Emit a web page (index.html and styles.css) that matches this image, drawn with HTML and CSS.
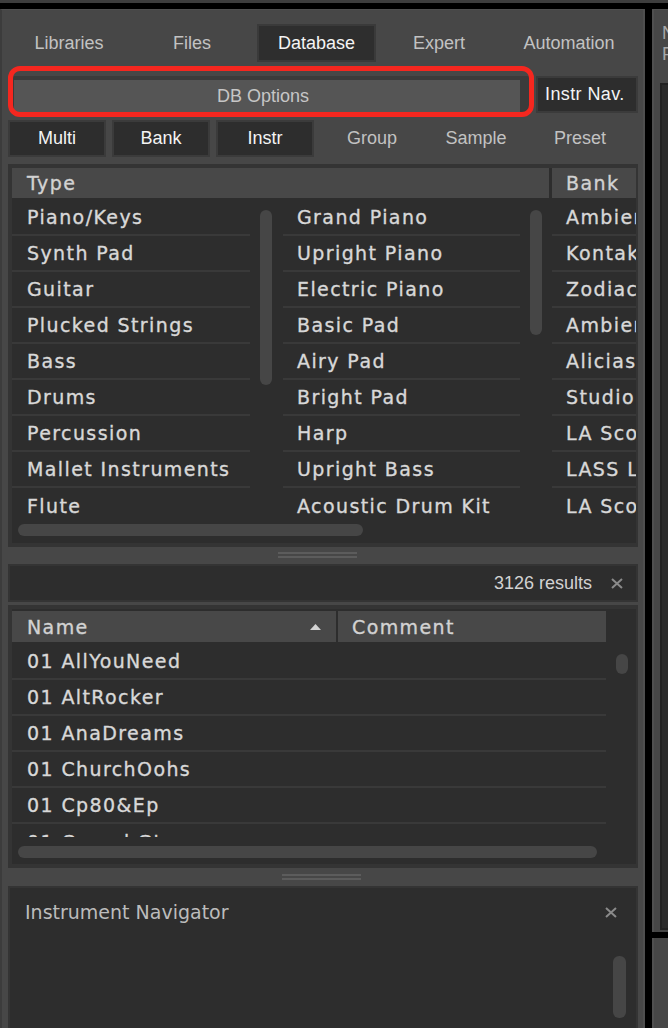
FILE: index.html
```html
<!DOCTYPE html>
<html>
<head>
<meta charset="utf-8">
<link rel="stylesheet" href="styles.css">
</head>
<body>
<div class="topbar"></div>
<div class="workspace">
  <div class="browser">
    <div class="tabs">
      <div class="tab">Libraries</div>
      <div class="tab">Files</div>
      <div class="tab active">Database</div>
      <div class="tab">Expert</div>
      <div class="tab">Automation</div>
    </div>
    <div class="dbrow">
      <div class="dbopt">DB Options</div>
      <div class="instrnav">Instr Nav.</div>
    </div>
    <div class="highlight"></div>
    <div class="filters">
      <div class="filt on">Multi</div>
      <div class="filt on">Bank</div>
      <div class="filt on">Instr</div>
      <div class="filt">Group</div>
      <div class="filt">Sample</div>
      <div class="filt">Preset</div>
    </div>

    <div class="attr">
      <div class="attr-head">
        <div class="hcell type">Type</div>
        <div class="hsep"></div>
        <div class="hcell bank">Bank</div>
      </div>
      <div class="attr-body">
        <div class="col c1">
          <div class="row">Piano/Keys</div>
          <div class="row">Synth Pad</div>
          <div class="row">Guitar</div>
          <div class="row">Plucked Strings</div>
          <div class="row">Bass</div>
          <div class="row">Drums</div>
          <div class="row">Percussion</div>
          <div class="row">Mallet Instruments</div>
          <div class="row last">Flute</div>
        </div>
        <div class="vtrack t1"><div class="thumb th1"></div></div>
        <div class="col c2">
          <div class="row">Grand Piano</div>
          <div class="row">Upright Piano</div>
          <div class="row">Electric Piano</div>
          <div class="row">Basic Pad</div>
          <div class="row">Airy Pad</div>
          <div class="row">Bright Pad</div>
          <div class="row">Harp</div>
          <div class="row">Upright Bass</div>
          <div class="row last">Acoustic Drum Kit</div>
        </div>
        <div class="vtrack t2"><div class="thumb th2"></div></div>
        <div class="col c3">
          <div class="row">Ambient Piano</div>
          <div class="row">Kontakt Factory</div>
          <div class="row">Zodiac</div>
          <div class="row">Ambient Guitar</div>
          <div class="row">Alicias Keys</div>
          <div class="row">Studio Drummer</div>
          <div class="row">LA Scoring Strings</div>
          <div class="row">LASS Lite</div>
          <div class="row last">LA Scoring Strings</div>
        </div>
      </div>
      <div class="hscroll hs1"></div>
    </div>

    <div class="split"><div class="grip"></div><div class="grip"></div></div>

    <div class="results">
      <span class="count">3126 results</span>
      <svg class="xicon" width="12" height="11" viewBox="0 0 12 11"><path d="M1 1 L11 10 M11 1 L1 10" stroke="#8a8a8a" stroke-width="2"/></svg>
    </div>

    <div class="names">
      <div class="names-head">
        <div class="hcell name"><span>Name</span><svg width="11" height="6" viewBox="0 0 11 6"><path d="M5.5 0 L11 6 L0 6 Z" fill="#d2d2d2"/></svg></div>
        <div class="hsep2"></div>
        <div class="hcell comment">Comment</div>
      </div>
      <div class="names-body">
        <div class="nlist">
          <div class="row">01 AllYouNeed</div>
          <div class="row">01 AltRocker</div>
          <div class="row">01 AnaDreams</div>
          <div class="row">01 ChurchOohs</div>
          <div class="row">01 Cp80&amp;Ep</div>
          <div class="row last">01 CrunchGtr</div>
        </div>
        <div class="vtrack t3"><div class="thumb th3"></div></div>
      </div>
      <div class="hscroll hs2"></div>
    </div>

    <div class="split split2"><div class="grip"></div><div class="grip"></div></div>

    <div class="nav">
      <div class="nav-title">
        <span>Instrument Navigator</span>
        <svg class="xicon" width="12" height="11" viewBox="0 0 12 11"><path d="M1 1 L11 10 M11 1 L1 10" stroke="#8a8a8a" stroke-width="2"/></svg>
      </div>
      <div class="nav-track"><div class="thumb th4"></div></div>
    </div>
  </div>

  <div class="side">
    <div class="side-top">
      <div class="side-text">New</div>
      <div class="side-text">Fx</div>
      <div class="side-inset"></div>
    </div>
    <div class="side-bottom"></div>
  </div>
</div>
</body>
</html>
```

FILE: styles.css
```css
* { box-sizing: border-box; }

body {
  margin: 0;
  width: 668px;
  height: 1028px;
  overflow: hidden;
  background: #000;
  font-family: "DejaVu Sans", sans-serif;
}

.topbar {
  height: 3px;
  background: #3e3e3e;
}

.workspace {
  display: flex;
  gap: 7px;
  padding-top: 6px;
  height: 1025px;
}

.browser {
  position: relative;
  flex: none;
  width: 645px;
  background: #474747;
  border-left: 2px solid #3c3c3c;
  border-right: 2px solid #4f4f4f;
  border-top: 1px solid #505050;
  padding: 14px 5px 0 6px;
  display: flex;
  flex-direction: column;
  overflow: hidden;
}

/* tabs */
.tabs {
  display: grid;
  grid-template-columns: 122px 124px 124px 122px 1fr;
  height: 38px;
}
.tab {
  display: flex;
  align-items: center;
  justify-content: center;
  padding-top: 1px;
  font: 18px "Liberation Sans", sans-serif;
  color: #c2c2c2;
}
.tab.active {
  margin: 0 2px 0 3px;
  background: #2e2e2e;
  border: 2px solid #3a3a3a;
  color: #f4f4f4;
}

/* DB options row */
.dbrow {
  display: flex;
  margin-top: 14px;
  height: 37px;
}
.dbopt {
  margin-left: 5px;
  width: 516px;
  background: #555555;
  border-top: 4px solid #3b3b3b;
  border-left: 1px solid #3b3b3b;
  border-right: 9px solid #3b3b3b;
  display: flex;
  align-items: center;
  justify-content: center;
  padding-right: 8px;
  font: 18px "Liberation Sans", sans-serif;
  color: #c6c6c6;
}
.instrnav {
  margin-left: 7px;
  width: 102px;
  background: #2d2d2d;
  border: 2px solid #3b3b3b;
  padding-left: 7px;
  display: flex;
  align-items: center;
  overflow: hidden;
  white-space: nowrap;
  font: 18px "Liberation Sans", sans-serif;
  letter-spacing: 0.4px;
  color: #f4f4f4;
}
.highlight {
  position: absolute;
  left: 6px;
  top: 56px;
  width: 526px;
  height: 51px;
  border: 5px solid #f5271f;
  border-radius: 12px;
  pointer-events: none;
}

/* filter row */
.filters {
  display: grid;
  grid-template-columns: repeat(6, 104px);
  margin-top: 7px;
  height: 37px;
}
.filt {
  display: flex;
  align-items: center;
  justify-content: center;
  font: 18px "Liberation Sans", sans-serif;
  color: #c2c2c2;
}
.filt.on {
  margin-right: 6px;
  background: #2d2d2d;
  border: 2px solid #3b3b3b;
  color: #f4f4f4;
}

/* attribute table */
.attr {
  margin-top: 7px;
  height: 383px;
  flex: none;
  background: #2d2d2d;
  border-style: solid;
  border-color: #343434;
  border-width: 4px 2px 4px 4px;
}
.attr-head {
  display: flex;
  height: 30px;
}
.hcell {
  background: #484848;
  display: flex;
  align-items: center;
  padding-left: 15px;
  font: 19px "DejaVu Sans", sans-serif;
  letter-spacing: 1.4px;
  -webkit-text-stroke: 0.35px #d2d2d2;
  color: #d2d2d2;
  white-space: nowrap;
  overflow: hidden;
}
.hcell.type { width: 537px; }
.hsep { width: 3px; }
.hcell.bank { flex: 1; padding-left: 14px; }

.attr-body {
  display: flex;
  height: 326px;
  padding-top: 2px;
  overflow: hidden;
}
.col { overflow: hidden; }
.c1 { width: 238px; }
.c2 { width: 237px; }
.c3 { flex: 1; }
.c2 .row, .c3 .row { padding-left: 14px; }

.row {
  height: 36px;
  border-bottom: 2px solid #393939;
  padding-left: 15px;
  display: flex;
  align-items: center;
  font: 19px "DejaVu Sans", sans-serif;
  letter-spacing: 1.4px;
  -webkit-text-stroke: 0.35px #d8d8d8;
  color: #d8d8d8;
  white-space: nowrap;
  overflow: hidden;
  flex: none;
}
.row.last { border-bottom: none; }

.vtrack { flex: none; }
.t1 { width: 33px; padding: 10px 0 0 10px; }
.t2 { width: 32px; padding: 10px 0 0 10px; }
.thumb {
  width: 12px;
  border-radius: 6px;
  background: #464646;
}
.th1 { height: 175px; }
.th2 { height: 125px; }

.hscroll {
  height: 12px;
  border-radius: 6px;
  background: #464646;
  margin-left: 6px;
}
.hs1 { width: 345px; }

/* splitters */
.split {
  flex: none;
  height: 17px;
  padding: 5px 0 0 270px;
  display: flex;
  flex-direction: column;
  gap: 2px;
}
.grip {
  width: 79px;
  height: 2px;
  background: #5c5c5c;
}
.split2 {
  height: 18px;
  padding: 6px 0 0 274px;
}

/* results bar */
.results {
  flex: none;
  height: 38px;
  background: #2d2d2d;
  border: 2px solid #343434;
  display: flex;
  align-items: center;
  justify-content: flex-end;
  gap: 19px;
  padding-right: 13px;
  font: 18px "Liberation Sans", sans-serif;
  color: #d2d2d2;
}
.xicon { display: block; }

/* names table */
.names {
  flex: none;
  margin-top: 3px;
  height: 263px;
  background: #2d2d2d;
  border-style: solid;
  border-color: #343434;
  border-width: 4px 2px 4px 4px;
  padding-top: 2px;
}
.names-head {
  display: flex;
  width: 594px;
  height: 31px;
}
.hcell.name {
  width: 324px;
  justify-content: space-between;
  padding-right: 15px;
}
.hsep2 { width: 2px; }
.hcell.comment { flex: 1; padding-left: 14px; }

.names-body {
  display: flex;
  height: 195px;
}
.nlist {
  width: 594px;
  padding-top: 2px;
  overflow: hidden;
}
.t3 { width: 28px; padding: 12px 0 0 10px; }
.th3 { height: 20px; }
.hs2 { width: 579px; margin-top: 9px; }

/* instrument navigator */
.nav {
  flex: 1;
  background: #2d2d2d;
  border-style: solid;
  border-color: #343434;
  border-width: 2px 2px 0 2px;
  padding-top: 12px;
}
.nav-title {
  display: flex;
  align-items: center;
  justify-content: space-between;
  height: 24px;
  padding: 0 19px 0 15px;
  font: 19px "DejaVu Sans", sans-serif;
  color: #bcbcbc;
}
.nav-track {
  display: flex;
  justify-content: flex-end;
  margin-top: 32px;
  padding-right: 10px;
}
.th4 { width: 13px; height: 62px; }

/* right column */
.side {
  flex: 1;
  display: flex;
  flex-direction: column;
  gap: 6px;
  overflow: hidden;
}
.side-top {
  height: 923px;
  flex: none;
  background: #474747;
  border-left: 2px solid #505050;
  border-top: 1px solid #505050;
  padding-top: 13px;
  overflow: hidden;
}
.side-text {
  height: 21px;
  padding-left: 8px;
  font: 18px "Liberation Sans", sans-serif;
  color: #a8a8a8;
  white-space: nowrap;
}
.side-inset {
  margin: 18px 0 0 6px;
  height: 847px;
  background: #2b2b2b;
  border: 2px solid #222;
  border-right: none;
}
.side-bottom {
  flex: 1;
  background: #474747;
  border-left: 2px solid #505050;
}
```
